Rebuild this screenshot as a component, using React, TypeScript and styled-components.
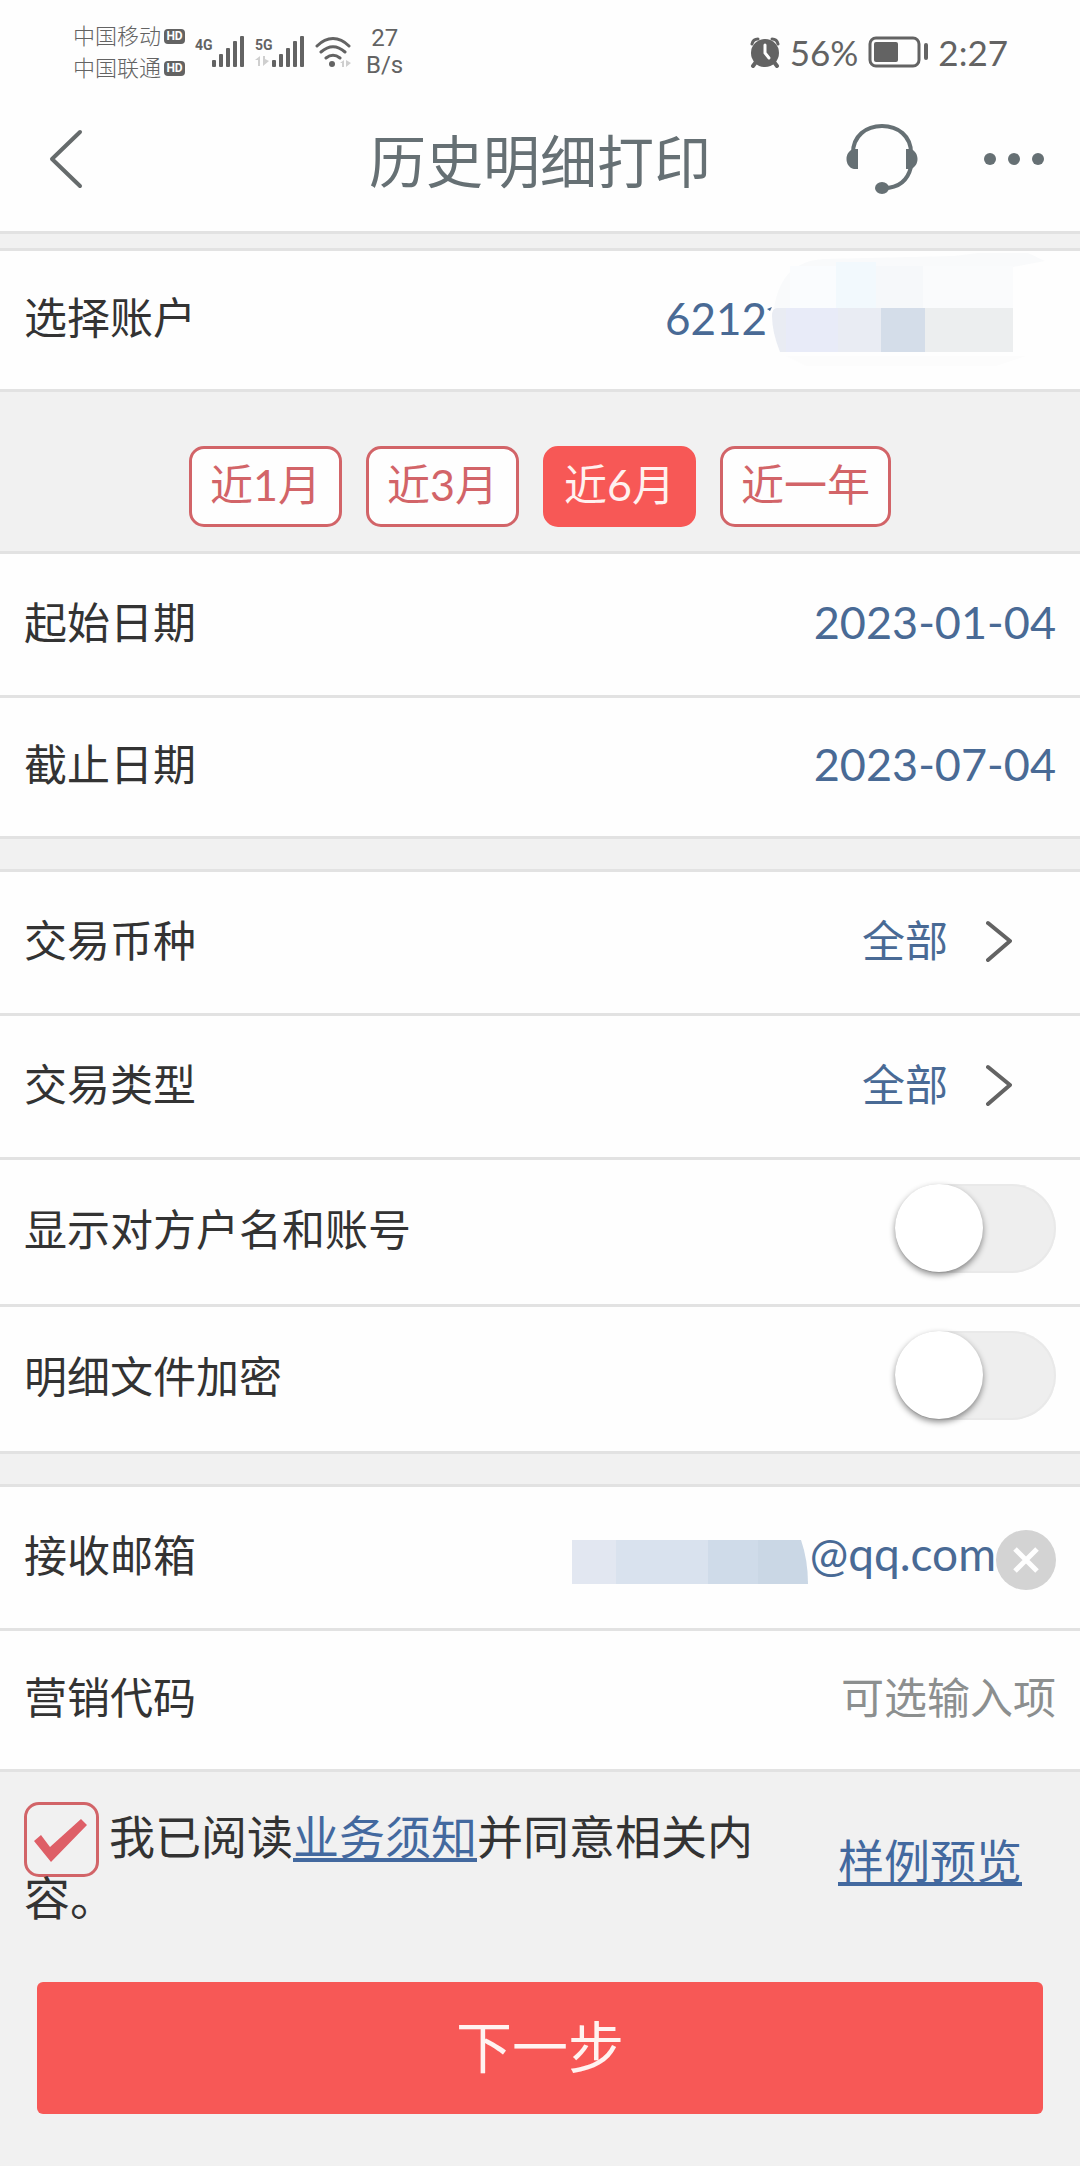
import React, { useState } from "react";
import styled, { createGlobalStyle } from "styled-components";

const color = {
  page: "#f1f1f1",
  surface: "#fefefe",
  line: "#e2e2e2",
  ink: "#333333",
  heading: "#667074",
  status: "#636363",
  value: "#496a95",
  link: "#43699f",
  muted: "#8c8f8f",
  accent: "#f75856",
  accentLine: "#d26468",
};

const GlobalStyle = createGlobalStyle`
  *, *::before, *::after { box-sizing: border-box; }
  body {
    margin: 0;
    background: ${color.page};
    color: ${color.ink};
    font-family: Lato, "Noto Sans CJK SC", sans-serif;
    font-size: 43px;
    line-height: 60px;
  }
  button, input, select {
    margin: 0;
    padding: 0;
    border: 0;
    background: none;
    color: inherit;
    font: inherit;
  }
  svg { display: block; flex: none; }
`;

const Page = styled.main`
  min-height: 100vh;
  display: flex;
  flex-direction: column;
`;

const Header = styled.header`
  background: ${color.surface};
  border-bottom: 3px solid ${color.line};
  margin-bottom: 14px;
`;

const StatusBar = styled.div`
  display: flex;
  justify-content: space-between;
  align-items: center;
  padding: 20px 72px 12px 73px;
  color: ${color.status};
`;

const StatusGroup = styled.div`
  display: flex;
  align-items: center;
  gap: 10px;
`;

const Carriers = styled.div`
  display: grid;
  font-size: 22px;
  line-height: 32px;
  font-weight: 300;
`;

const Carrier = styled.div`
  display: flex;
  align-items: center;
  gap: 3px;
`;

const HdBadge = styled.span`
  width: 21px;
  height: 15px;
  border-radius: 4px;
  background: ${color.status};
  color: ${color.surface};
  font: 700 12px/15px Roboto, sans-serif;
  text-align: center;
`;

const Signal = styled.div`
  display: flex;
  align-items: flex-start;
  height: 32px;
`;

const SignalKind = styled.div`
  width: 17px;
  font: 700 14px/18px Roboto, sans-serif;
`;

const Speed = styled.div`
  padding-left: 4px;
  font: 400 24px/27px Roboto, sans-serif;
  text-align: center;
`;

const StatusText = styled.span`
  font-size: 35px;
  line-height: 34px;
`;

const TitleBar = styled.div`
  display: grid;
  grid-template-columns: 1fr auto 1fr;
  align-items: center;
  height: 135px;
  padding: 0 36px 9px;
  color: ${color.heading};
`;

const Title = styled.h1`
  margin: 0;
  padding-top: 3px;
  font-size: 57px;
  line-height: 80px;
  font-weight: 400;
`;

const Tools = styled.div`
  display: flex;
  justify-content: flex-end;
  align-items: center;
  gap: 66px;
`;

const IconButton = styled.button`
  display: flex;
  justify-self: start;
  align-items: center;
  cursor: pointer;
`;

const Group = styled.section`
  background: ${color.surface};
  border: solid ${color.line};
  border-width: 3px 0;
`;

const Gap = styled.div`
  height: 30px;
`;

const Row = styled.div<{ $height: number }>`
  display: flex;
  align-items: center;
  justify-content: space-between;
  min-height: ${(p) => p.$height}px;
  padding: 0 24px 4px;
  &:not(:first-child) {
    border-top: 3px solid ${color.line};
  }
`;

const Label = styled.label`
  flex: none;
`;

const AccountButton = styled.button`
  display: flex;
  align-items: center;
  color: ${color.value};
  font-size: 44px;
  cursor: pointer;
`;

const DateInput = styled.input`
  flex: 1;
  min-width: 0;
  padding-bottom: 2px;
  text-align: right;
  color: ${color.value};
  font-size: 45px;
  outline: none;
`;

const SelectBox = styled.div`
  display: flex;
  align-items: center;
  gap: 38px;
  padding-right: 44px;
`;

const Select = styled.select`
  appearance: none;
  color: ${color.value};
  text-align-last: right;
  outline: none;
`;

const Switch = styled.input`
  appearance: none;
  width: 161px;
  height: 89px;
  margin-bottom: 3px;
  border-radius: 45px;
  background: #eeeeee;
  box-shadow: inset 0 0 0 2px #e9e9e9;
  cursor: pointer;
  &::before {
    content: "";
    display: block;
    width: 88px;
    height: 88px;
    border-radius: 50%;
    background: #ffffff;
    box-shadow: 0 3px 6px rgba(0, 0, 0, 0.45);
  }
  &:checked {
    background: ${color.accent};
  }
  &:checked::before {
    margin-left: auto;
  }
`;

const MailBox = styled.div`
  display: flex;
  align-items: center;
  padding-top: 9px;
`;

const MailInput = styled.input`
  width: 188px;
  padding-bottom: 12px;
  color: ${color.value};
  font-size: 46px;
  text-align: right;
  outline: none;
`;

const ClearButton = styled.button`
  width: 60px;
  height: 60px;
  display: grid;
  place-items: center;
  border-radius: 50%;
  background: #d3d3d3;
  cursor: pointer;
`;

const CodeInput = styled.input`
  flex: 1;
  min-width: 0;
  text-align: right;
  outline: none;
  &::placeholder {
    color: ${color.muted};
    opacity: 1;
  }
`;

const Ranges = styled.div`
  display: flex;
  justify-content: center;
  gap: 24px;
  padding: 54px 24px 24px;
`;

const Chip = styled.button<{ $active: boolean }>`
  height: 81px;
  padding: 0 18px 3px;
  border: 3px solid ${(p) => (p.$active ? color.accent : color.accentLine)};
  border-radius: 15px;
  background: ${(p) => (p.$active ? color.accent : color.surface)};
  color: ${(p) => (p.$active ? "#fff1ef" : color.accentLine)};
  white-space: nowrap;
  cursor: pointer;
`;

const Consent = styled.div`
  display: flex;
  align-items: center;
  justify-content: space-between;
  gap: 60px;
  padding: 30px 58px 0 24px;
  font-size: 46px;
  line-height: 42px;
`;

const ConsentText = styled.label`
  flex: 1;
`;

const Tick = styled.input`
  appearance: none;
  width: 75px;
  height: 75px;
  margin-right: 10px;
  vertical-align: -23px;
  border: 3px solid ${color.accentLine};
  border-radius: 15px;
  &:checked {
    background: center / 100% 100% no-repeat
      url("data:image/svg+xml,%3Csvg xmlns='http://www.w3.org/2000/svg' viewBox='0 0 69 69'%3E%3Cpath d='M7 36l7-6 9 12L54 14l6 6-36 37z' fill='%23de5f67'/%3E%3C/svg%3E");
  }
`;

const Link = styled.a`
  flex: none;
  color: ${color.link};
  text-decoration: underline;
  text-decoration-thickness: 4px;
  text-underline-offset: 4px;
`;

const Submit = styled.button`
  height: 132px;
  margin: 63px 37px 52px;
  padding-bottom: 3px;
  border-radius: 6px;
  background: ${color.accent};
  color: #fff3f1;
  font-size: 56px;
  cursor: pointer;
`;

const Bars = () => (
  <svg width="33" height="31" viewBox="0 0 33 31" fill="currentColor">
    <rect x="0" y="24" width="4" height="7" rx="1" />
    <rect x="7" y="18" width="4" height="13" rx="1" />
    <rect x="14" y="12" width="4" height="19" rx="1" />
    <rect x="21" y="5" width="4" height="26" rx="1" />
    <rect x="28" y="0" width="4" height="31" rx="1" />
  </svg>
);

const DataArrows = () => (
  <svg width="14" height="12" viewBox="0 0 14 12" fill="#cfcfcf">
    <path d="M0 6l5-4v10H3V6zM8 2h2v3l4 2-6 5z" />
  </svg>
);

const Wifi = () => (
  <svg width="37" height="31" viewBox="0 0 37 31" fill="none" stroke="currentColor" strokeWidth="3" strokeLinecap="round">
    <path d="M2 9C12-1 24-1 34 9M6 15c8-7 16-7 24 0M11 21c5-4 9-4 14 0" />
    <circle cx="17" cy="27" r="3" fill="currentColor" stroke="none" />
    <path d="M25 26l4-3v7h-2v-4zM31 23l5 3-5 4z" fill="#cfcfcf" stroke="none" />
  </svg>
);

const Alarm = () => (
  <svg width="30" height="31" viewBox="0 0 30 31">
    <g fill="none" stroke="currentColor" strokeLinecap="round">
      <path d="M2 7Q3 2 8 2M22 2q5 0 6 5" strokeWidth="3" />
      <path d="M6 25l-3 4M24 25l3 4" strokeWidth="4" />
    </g>
    <circle cx="15" cy="16" r="14" fill="currentColor" />
    <path d="M15 8v8l4 5" fill="none" stroke="#fefefe" strokeWidth="3" strokeLinecap="round" />
  </svg>
);

const Battery = () => (
  <svg width="60" height="32" viewBox="0 0 60 32" fill="currentColor">
    <rect x="2" y="2" width="49" height="28" rx="6" fill="none" stroke="currentColor" strokeWidth="3" />
    <rect x="6" y="6" width="24" height="20" rx="2" />
    <rect x="56" y="7" width="4" height="17" rx="2" />
  </svg>
);

const Back = () => (
  <svg width="60" height="60" viewBox="0 0 60 60" fill="none" stroke="#666b6c" strokeWidth="4" strokeLinecap="round" strokeLinejoin="round">
    <path d="M44 3L16 30l28 27" />
  </svg>
);

const Headset = () => (
  <svg width="72" height="72" viewBox="0 0 72 72" fill="currentColor">
    <path d="M7 30C7 13 20 3 36 3s29 10 29 27M65 44C62 56 54 65 38 65" fill="none" stroke="currentColor" strokeWidth="4" />
    <path d="M12 26v20H8C-2 44-2 28 8 26zM60 26v20h4c10-2 10-18 0-20z" />
    <ellipse cx="36" cy="65" rx="7" ry="6" />
  </svg>
);

const Dots = () => (
  <svg width="60" height="60" viewBox="0 0 60 60" fill="currentColor">
    <circle cx="6" cy="30" r="6" />
    <circle cx="30" cy="30" r="6" />
    <circle cx="54" cy="30" r="6" />
  </svg>
);

const Chevron = () => (
  <svg width="26" height="42" viewBox="0 0 26 42" fill="none" stroke="#636363" strokeWidth="4" strokeLinecap="round" strokeLinejoin="round">
    <path d="M2 3l22 18L2 40" />
  </svg>
);

const AccountMask = () => (
  <svg width="289" height="132" viewBox="1 0 289 132">
    <path d="M1 57l5-2-2 4z" fill="#496a95" />
    <path d="M8 56C14 22 30 9 58 7l130-3 24-3h50l17 8-32 6v40z" fill="#f9fafb" />
    <rect x="24" y="14" width="46" height="42" fill="#fafcfe" />
    <rect x="70" y="10" width="40" height="46" fill="#f2f9fd" />
    <rect x="110" y="14" width="47" height="42" fill="#f6f8fa" />
    <rect x="157" y="14" width="90" height="42" fill="#fafbfc" />
    <path d="M6 64q0-8 5-8h105v44H14Q6 80 6 64z" fill="#e9ecf3" />
    <rect x="20" y="56" width="52" height="44" fill="#e8ebf8" />
    <rect x="115" y="56" width="44" height="44" fill="#d4dde9" />
    <rect x="159" y="56" width="88" height="44" fill="#eceeef" />
    <path d="M20 104h240l-30 10H40z" fill="#fcfcfc" />
  </svg>
);

const MailMask = () => (
  <svg width="236" height="60" viewBox="0 0 236 60">
    <rect x="0" y="10" width="44" height="44" fill="#e2e7f1" />
    <rect x="44" y="10" width="92" height="44" fill="#d9e2ee" />
    <rect x="136" y="10" width="50" height="44" fill="#cfdbe9" />
    <path d="M186 10h43q7 20 7 44h-50z" fill="#cad7e5" />
  </svg>
);

const ranges = ["近1月", "近3月", "近6月", "近一年"];

export default function App() {
  const [range, setRange] = useState("近6月");
  const [start, setStart] = useState("2023-01-04");
  const [end, setEnd] = useState("2023-07-04");
  const [mail, setMail] = useState("@qq.com");

  return (
    <>
      <GlobalStyle />
      <Page>
        <Header>
          <StatusBar>
            <StatusGroup>
              <Carriers>
                <Carrier>中国移动<HdBadge>HD</HdBadge></Carrier>
                <Carrier>中国联通<HdBadge>HD</HdBadge></Carrier>
              </Carriers>
              <Signal>
                <SignalKind>4G</SignalKind>
                <Bars />
              </Signal>
              <Signal>
                <SignalKind>
                  5G
                  <DataArrows />
                </SignalKind>
                <Bars />
              </Signal>
              <Wifi />
              <Speed>27<br />B/s</Speed>
            </StatusGroup>
            <StatusGroup>
              <Alarm />
              <StatusText>56%</StatusText>
              <Battery />
              <StatusText>2:27</StatusText>
            </StatusGroup>
          </StatusBar>
          <TitleBar>
            <IconButton aria-label="返回"><Back /></IconButton>
            <Title>历史明细打印</Title>
            <Tools>
              <IconButton aria-label="客服"><Headset /></IconButton>
              <IconButton aria-label="更多"><Dots /></IconButton>
            </Tools>
          </TitleBar>
        </Header>

        <Group>
          <Row $height={138}>
            <Label htmlFor="account">选择账户</Label>
            <AccountButton id="account">6212<AccountMask /></AccountButton>
          </Row>
        </Group>

        <Ranges>
          {ranges.map((name) => (
            <Chip key={name} $active={name === range} onClick={() => setRange(name)}>
              {name}
            </Chip>
          ))}
        </Ranges>

        <Group>
          <Row $height={141}>
            <Label htmlFor="start">起始日期</Label>
            <DateInput id="start" value={start} onChange={(e) => setStart(e.target.value)} />
          </Row>
          <Row $height={141}>
            <Label htmlFor="end">截止日期</Label>
            <DateInput id="end" value={end} onChange={(e) => setEnd(e.target.value)} />
          </Row>
        </Group>

        <Gap />

        <Group>
          <Row $height={141}>
            <Label htmlFor="currency">交易币种</Label>
            <SelectBox>
              <Select id="currency"><option>全部</option></Select>
              <Chevron />
            </SelectBox>
          </Row>
          <Row $height={144}>
            <Label htmlFor="kind">交易类型</Label>
            <SelectBox>
              <Select id="kind"><option>全部</option></Select>
              <Chevron />
            </SelectBox>
          </Row>
          <Row $height={147}>
            <Label htmlFor="names">显示对方户名和账号</Label>
            <Switch id="names" type="checkbox" role="switch" />
          </Row>
          <Row $height={147}>
            <Label htmlFor="encrypt">明细文件加密</Label>
            <Switch id="encrypt" type="checkbox" role="switch" />
          </Row>
        </Group>

        <Gap />

        <Group>
          <Row $height={141}>
            <Label htmlFor="mail">接收邮箱</Label>
            <MailBox>
              <MailMask />
              <MailInput id="mail" value={mail} onChange={(e) => setMail(e.target.value)} />
              <ClearButton aria-label="清除" onClick={() => setMail("")}>
                <svg width="28" height="28" viewBox="0 0 28 28" stroke="#fefefe" strokeWidth="5">
                  <path d="M3 3l22 22M25 3L3 25" />
                </svg>
              </ClearButton>
            </MailBox>
          </Row>
          <Row $height={141}>
            <Label htmlFor="code">营销代码</Label>
            <CodeInput id="code" placeholder="可选输入项" />
          </Row>
        </Group>

        <Consent>
          <ConsentText>
            <Tick type="checkbox" defaultChecked />
            我已阅读<Link href="#notice">业务须知</Link>并同意相关内容。
          </ConsentText>
          <Link href="#sample">样例预览</Link>
        </Consent>

        <Submit>下一步</Submit>
      </Page>
    </>
  );
}
